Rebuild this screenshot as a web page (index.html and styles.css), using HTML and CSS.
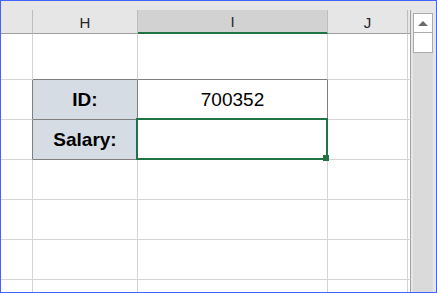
FILE: index.html
```html
<!DOCTYPE html>
<html lang="en">
<head>
    <meta charset="UTF-8">
    <meta name="viewport" content="width=device-width, initial-scale=1.0">
    <title>Sheet</title>
    <link rel="stylesheet" href="styles.css">
</head>
<body>
    <div class="window">
        <div class="sheet">
            <div class="strip"></div>

            <div class="hd"></div>
            <div class="hd">H</div>
            <div class="hd hd-sel">I</div>
            <div class="hd">J</div>
            <div class="hd hd-end"></div>

            <div class="c"></div>
            <div class="c b-dark"></div>
            <div class="c b-dark"></div>
            <div class="c"></div>
            <div class="c c-end"></div>

            <div class="c r-dark"></div>
            <div class="c label r-dark b-dark">ID:</div>
            <div class="c value r-dark b-dark">700352</div>
            <div class="c"></div>
            <div class="c c-end"></div>

            <div class="c r-dark"></div>
            <div class="c label r-dark b-dark">Salary:</div>
            <div class="c sel r-dark b-dark"></div>
            <div class="c"></div>
            <div class="c c-end"></div>

            <div class="c"></div><div class="c"></div><div class="c"></div><div class="c"></div><div class="c c-end"></div>
            <div class="c"></div><div class="c"></div><div class="c"></div><div class="c"></div><div class="c c-end"></div>
            <div class="c"></div><div class="c"></div><div class="c"></div><div class="c"></div><div class="c c-end"></div>
            <div class="c"></div><div class="c"></div><div class="c"></div><div class="c"></div><div class="c c-end"></div>
        </div>

        <div class="scrollbar">
            <div class="track">
                <div class="btn-up"><span class="arrow"></span></div>
                <div class="thumb"></div>
            </div>
        </div>
    </div>
</body>
</html>
```

FILE: styles.css
```css
* {
    margin: 0;
    padding: 0;
    box-sizing: border-box;
    font-family: "Liberation Sans", Arial, sans-serif;
}

body {
    background-color: white;
}

.window {
    width: 437px;
    height: 293px;
    border: 1px solid #4362ff;
    display: grid;
    grid-template-columns: 410px 25px;
    overflow: hidden;
    background-color: white;
}

.sheet {
    display: grid;
    grid-template-columns: 32px 105px 190px 80px 3px;
    grid-template-rows: 9px 24px 46px repeat(6, 40px);
    overflow: hidden;
    height: 291px;
}

.strip {
    grid-column: 1 / -1;
    background-color: #e6e6e6;
}

.hd {
    background-color: #e6e6e6;
    border-right: 1px solid #bdbdbd;
    border-bottom: 1px solid #9e9e9e;
    display: flex;
    align-items: center;
    justify-content: center;
    font-size: 15px;
    color: #262626;
    padding-top: 1px;
}

.hd-sel {
    background-color: #d2d2d2;
    border-bottom: 2px solid #217346;
}

.hd-end {
    border-right: 1px solid #a0a0a0;
}

.c {
    border-right: 1px solid #d4d4d4;
    border-bottom: 1px solid #d4d4d4;
    display: flex;
    align-items: center;
    justify-content: center;
    font-size: 19px;
    color: black;
}

.c-end {
    border-right: 1px solid #a0a0a0;
}

.r-dark {
    border-right-color: #7f7f7f;
}

.b-dark {
    border-bottom-color: #7f7f7f;
}

.label {
    background-color: #d6dce4;
    font-weight: bold;
}

.sel {
    position: relative;
}

.sel::after {
    content: "";
    position: absolute;
    left: -2px;
    top: -2px;
    right: -1px;
    bottom: -1px;
    border: 2px solid #217346;
}

.sel::before {
    content: "";
    position: absolute;
    right: -2px;
    bottom: -2px;
    width: 6px;
    height: 6px;
    background-color: #217346;
    z-index: 1;
}

.scrollbar {
    background-color: #e6e6e6;
    padding: 12px 3px 0 2px;
}

.track {
    height: 100%;
    background-color: #dadada;
    display: flex;
    flex-direction: column;
}

.btn-up {
    height: 20px;
    background-color: white;
    border: 1px solid #ababab;
    display: flex;
    align-items: center;
    justify-content: center;
}

.arrow {
    width: 0;
    height: 0;
    border-left: 5px solid transparent;
    border-right: 5px solid transparent;
    border-bottom: 5px solid #6b6b6b;
}

.thumb {
    height: 21px;
    margin-top: -1px;
    background-color: white;
    border: 1px solid #ababab;
}
```
